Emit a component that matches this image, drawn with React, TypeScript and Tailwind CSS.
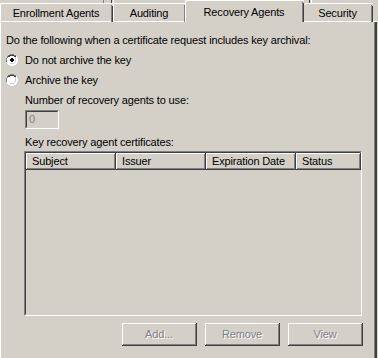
import React from "react";

const font = { fontFamily: '"Liberation Sans", Arial, sans-serif' };

function Radio({ checked }: { checked?: boolean }) {
  return (
    <svg width="12" height="12" viewBox="0 0 12 12" className="shrink-0">
      <path d="M4 0h4v1h2v1h1v2h1v4h-1v2h-1v1h-2v1h-4v-1h-2v-1h-1v-2h-1v-4h1v-2h1v-1h2z" fill="#ffffff" />
      <path d="M4 0h4v1h2v1h-2v-1h-4v1h-2v2h-1v4h-1v-4h1v-2h1v-1h2z" fill="#808080" />
      <path d="M4 1h4v1h2v1h-2v-1h-4v1h-2v1h-1v4h-0v-4h1v-2h1v-1h2z" fill="#404040" />
      <path d="M10 2h1v2h1v4h-1v2h-1v1h-2v1h-4v-1h-2v-1h2v1h4v-1h2v-2h1v-4h-1z" fill="#ffffff" />
      <path d="M9 3h1v1h0v4h-1v1h-1v1h-4v-1h4v-1h1v-1h0v-3h-0z" fill="#d4d0c8" />
      {checked && <path d="M5 4h2v1h1v2h-1v1h-2v-1h-1v-2h1z" fill="#000000" />}
    </svg>
  );
}

function Btn({ label }: { label: string }) {
  return (
    <div className="w-[75px] h-[23px] border-r border-b border-[#404040] bg-[#d4d0c8]">
      <div className="w-full h-full border-l border-t border-white">
        <div className="w-full h-full border-r border-b border-[#808080] flex items-center justify-center text-[11px] text-[#808080] [text-shadow:1px_1px_0_#ffffff]">
          {label}
        </div>
      </div>
    </div>
  );
}

function Header({ label, w }: { label: string; w: string }) {
  return (
    <div className={`${w} h-[17px] border-r border-b border-[#404040] shrink-0`}>
      <div className="w-full h-full border-l border-t border-white">
        <div className="w-full h-full border-r border-b border-[#808080] pl-[5px] flex items-center text-[11px] text-black">
          {label}
        </div>
      </div>
    </div>
  );
}

export default function App() {
  return (
    <div className="w-[378px] h-[358px] bg-[#d4d0c8] overflow-hidden relative tracking-[-0.15px]" style={font}>
      {/* remnants of upper tab row */}
      <div className="absolute left-[103px] top-0 w-px h-[3px] bg-[#808080]" />
      <div className="absolute left-[111px] top-0 w-px h-[3px] bg-[#404040]" />
      <div className="absolute left-[113px] top-0 w-px h-[3px] bg-white" />
      <div className="absolute left-[309px] top-0 w-px h-[3px] bg-[#404040]" />
      <div className="absolute left-[311px] top-0 w-px h-[3px] bg-white" />

      {/* tabs */}
      <div className="flex items-end h-[22px] relative z-10">
        <div className="w-[113px] h-[19px] border-t border-l border-white rounded-tl-[2px] flex">
          <div className="flex-1 flex items-center justify-center pt-[1px] text-[11px] text-black">Enrollment Agents</div>
          <div className="w-px bg-[#808080] mt-[1px]" />
          <div className="w-px bg-[#404040] mt-[2px]" />
        </div>
        <div className="w-[72px] h-[19px] border-t border-l border-white rounded-tl-[2px] flex">
          <div className="flex-1 flex items-center justify-center pt-[1px] text-[11px] text-black">Auditing</div>
          <div className="w-px bg-[#808080] mt-[1px]" />
        </div>
        <div className="w-[119px] h-[22px] border-t border-l border-white rounded-tl-[2px] flex bg-[#d4d0c8]">
          <div className="flex-1 flex items-start justify-center pt-[3px] text-[11px] text-black">Recovery Agents</div>
          <div className="w-px bg-[#808080] mt-[1px]" />
          <div className="w-px bg-[#404040] mt-[2px]" />
        </div>
        <div className="w-[69px] h-[19px] border-t border-white rounded-tl-[2px] flex">
          <div className="flex-1 flex items-center justify-center pt-[1px] text-[11px] text-black">Security</div>
          <div className="w-px bg-[#808080] mt-[1px]" />
          <div className="w-px bg-[#404040] mt-[2px]" />
        </div>
      </div>

      {/* panel */}
      <div className="w-[377px] h-[340px] -mt-px border-t border-l border-white flex">
        <div className="flex-1 flex flex-col text-[11px] text-black pl-[5px] pt-[11px]">
          <div className="h-[14px] leading-[14px]">Do the following when a certificate request includes key archival:</div>
          <div className="flex items-center gap-[7px] mt-[6px] h-[14px]">
            <Radio checked />
            <span>Do not archive the key</span>
          </div>
          <div className="flex items-center gap-[7px] mt-[6px] h-[14px]">
            <Radio />
            <span>Archive the key</span>
          </div>
          <div className="pl-[19px] mt-[6px] h-[14px] leading-[14px]">Number of recovery agents to use:</div>
          <div className="ml-[19px] mt-[3px] w-[34px] h-[19px] border-t border-l border-[#808080] border-r border-b border-r-white border-b-white">
            <div className="w-full h-full border-t border-l border-[#404040] border-r border-b border-r-[#d4d0c8] border-b-[#d4d0c8] pl-[2px] text-[#808080] leading-[15px]">
              0
            </div>
          </div>
          <div className="pl-[19px] mt-[6px] h-[14px] leading-[14px]">Key recovery agent certificates:</div>
          <div className="ml-[18px] mt-[2px] w-[338px] h-[165px] border-t border-l border-[#808080] border-r border-b border-r-white border-b-white">
            <div className="w-full h-full border-t border-l border-[#404040] border-r border-b border-r-[#d4d0c8] border-b-[#d4d0c8] bg-[#d4d0c8] flex flex-col">
              <div className="flex">
                <Header label="Subject" w="w-[90px]" />
                <Header label="Issuer" w="w-[90px]" />
                <Header label="Expiration Date" w="w-[90px]" />
                <Header label="Status" w="w-[65px]" />
              </div>
            </div>
          </div>
          <div className="flex justify-end gap-[8px] mt-[7px] pr-[11px]">
            <Btn label="Add..." />
            <Btn label="Remove" />
            <Btn label="View" />
          </div>
        </div>
        <div className="w-px bg-[#808080]" />
        <div className="w-[2px] bg-[#404040]" />
      </div>
    </div>
  );
}
